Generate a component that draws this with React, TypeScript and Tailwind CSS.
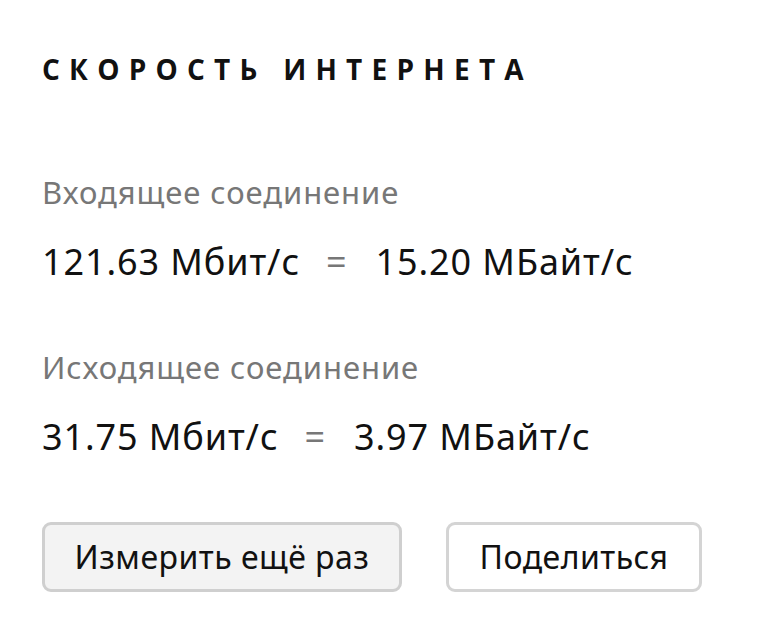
export default function App() {
  const body = { fontFamily: "'Noto Sans', sans-serif" };
  return (
    <div className="w-[768px] h-[623px] bg-white text-black pl-[42px] pt-[51px]" style={body}>
      <h1 className="text-[28px] leading-[36px] font-bold tracking-[0.33em] text-[#111]" style={{ fontFamily: "'Open Sans', sans-serif" }}>
        СКОРОСТЬ ИНТЕРНЕТА
      </h1>
      <div className="mt-[88px] text-[31px] leading-[34px] tracking-[0.03em] text-[#777]">Входящее соединение</div>
      <div className="mt-[33px] flex items-baseline text-[36px] leading-[40px] tracking-[0.025em] text-[#111]">
        <span>121.63 Мбит/с</span>
        <span className="ml-[26px] mr-[28px] text-[#777]">=</span>
        <span>15.20 МБайт/с</span>
      </div>
      <div className="mt-[68px] text-[31px] leading-[34px] tracking-[0.03em] text-[#777]">Исходящее соединение</div>
      <div className="mt-[33px] flex items-baseline text-[36px] leading-[40px] tracking-[0.025em] text-[#111]">
        <span>31.75 Мбит/с</span>
        <span className="ml-[26px] mr-[28px] text-[#777]">=</span>
        <span>3.97 МБайт/с</span>
      </div>
      <div className="mt-[65px] flex gap-[44px]">
        <button className="w-[360px] h-[70px] rounded-[9px] border-[3px] border-[#cfcfcf] bg-[#f3f3f3] text-[32px] tracking-[0.015em] text-[#111]">
          Измерить ещё раз
        </button>
        <button className="w-[256px] h-[70px] rounded-[9px] border-[3px] border-[#d4d4d4] bg-white text-[32px] tracking-[0.015em] text-[#111]">
          Поделиться
        </button>
      </div>
    </div>
  );
}
